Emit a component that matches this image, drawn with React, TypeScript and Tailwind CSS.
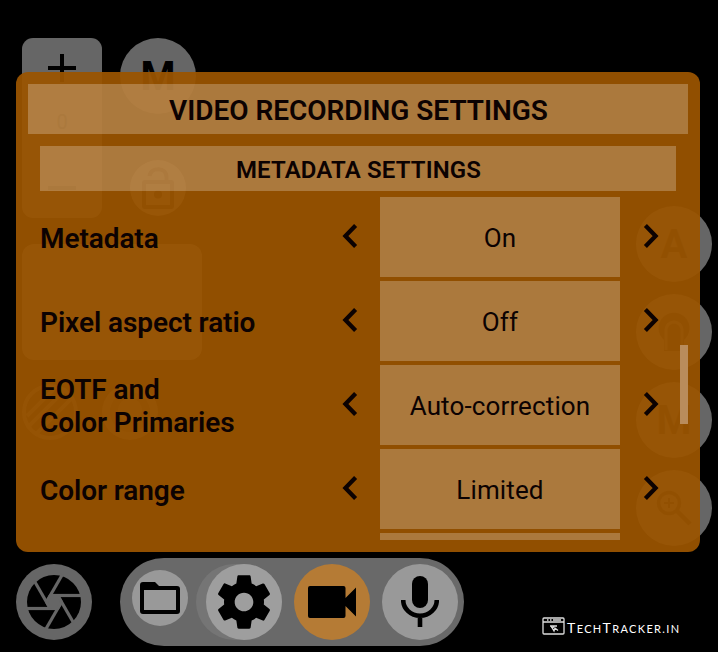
import React from "react";

const settings = [
  { label: ["Metadata"], value: "On" },
  { label: ["Pixel aspect ratio"], value: "Off" },
  { label: ["EOTF and", "Color Primaries"], value: "Auto-correction" },
  { label: ["Color range"], value: "Limited" },
];

function Chevron({ flip = false }: { flip?: boolean }) {
  return (
    <svg className={flip ? "block rotate-180" : "block"} width="16" height="26" viewBox="0 0 16 26" fill="none">
      <path d="M13.600 2.500 3.400 13 13.600 23.500" stroke="#0c0202" strokeWidth="4.200" />
    </svg>
  );
}

function CameraControls() {
  return (
    <div className="absolute inset-0 flex justify-between pl-[22px] pr-[6px] text-black">
      <div className="flex flex-col pt-[38px]">
        <div className="flex h-[180px] gap-[18px]">
          <div className="flex w-[80px] flex-col items-center justify-between rounded-[11px] bg-[#666] py-[16px]">
            <svg width="28" height="28" viewBox="0 0 28 28">
              <path d="M0 14h28M14 0v28" stroke="#000" strokeWidth="4" />
            </svg>
            <span className="-mt-[12px] text-[20px] leading-none">0</span>
            <svg width="28" height="28" viewBox="0 0 28 28">
              <path d="M0 14h28" stroke="#000" strokeWidth="4" />
            </svg>
          </div>
          <div className="flex flex-col items-center justify-between pb-[2px]">
            <div className="flex h-[76px] w-[76px] items-center justify-center rounded-full bg-[#666] pt-[2px] text-[40px] font-bold">M</div>
            <div className="flex h-[56px] w-[56px] items-center justify-center rounded-full bg-[#777]">
              <svg width="32" height="42" viewBox="0 0 32 42" fill="none" stroke="#111" strokeWidth="4">
                <rect x="2" y="15" width="28" height="25" rx="1" />
                <path d="M7.500 9C9 -.500 24.500 0 24.500 10V15" />
                <circle cx="16" cy="27.500" r="4" fill="#111" stroke="none" />
              </svg>
            </div>
          </div>
        </div>
        <div className="mt-[26px] h-[116px] w-[180px] rounded-[12px] bg-[#666]" />
        <div className="mt-[24px] flex gap-[24px]">
          <svg width="56" height="56" viewBox="0 0 56 56" fill="none" stroke="#484848" strokeWidth="4">
            <circle cx="28" cy="28" r="26" />
            <path d="M5 32 32 5M5 44 44 5M13 51 51 13" />
          </svg>
          <svg width="56" height="56" viewBox="0 0 56 56">
            <circle cx="28" cy="28" r="28" fill="#484848" />
            <circle cx="28" cy="28" r="20" fill="#222" />
            <circle cx="28" cy="26" r="12" fill="#484848" />
          </svg>
        </div>
      </div>
      <div className="flex flex-col gap-[12px] pt-[206px] text-[40px] font-bold text-[#1c1c1c]">
        <div className="flex h-[76px] w-[76px] items-center justify-center rounded-full bg-[#666] pt-[2px]">A</div>
        <div className="flex h-[76px] w-[76px] items-center justify-center rounded-full bg-[#666]">
          <svg width="34" height="40" viewBox="0 0 34 40">
            <path d="M7 28A15.500 15.500 0 1 1 27 28V39H7z" fill="#1c1c1c" />
            <path d="M9 38V18a8 8 0 0 1 16 0V38" fill="none" stroke="#5c5c5c" strokeWidth="3" />
          </svg>
        </div>
        <div className="flex h-[76px] w-[76px] items-center justify-center rounded-full bg-[#666] pt-[2px]">M</div>
        <div className="flex h-[76px] w-[76px] items-center justify-center rounded-full bg-[#666]">
          <svg width="36" height="36" viewBox="0 0 36 36" fill="none" stroke="#1c1c1c" strokeWidth="3.500">
            <circle cx="13" cy="13" r="10.500" />
            <path d="m21 21 13 13" strokeWidth="4.500" />
            <path d="M8 13h10M13 8v10" strokeWidth="2" />
          </svg>
        </div>
      </div>
    </div>
  );
}

function Aperture() {
  const blades = [0, 60, 120, 180, 240, 300];
  return (
    <svg width="76" height="76" viewBox="0 0 76 76">
      <circle cx="38" cy="38" r="38" fill="#666" />
      <circle cx="38" cy="38" r="27" fill="#000" />
      <path d="M47.200 38 42.600 30H33.400L28.800 38 33.400 46H42.600z" fill="#666" />
      {blades.map((a) => (
        <path key={a} d="M34 31.500H66" stroke="#666" strokeWidth="3.200" transform={`rotate(${a} 38 38)`} />
      ))}
    </svg>
  );
}

function BottomBar() {
  return (
    <div className="mt-[6px] flex h-[88px] items-center pl-[16px]">
      <Aperture />
      <div className="ml-[28px] flex h-[88px] w-[344px] items-center rounded-full bg-[#696969] pl-[12px]">
        <div className="mb-[8px] flex h-[56px] w-[56px] items-center justify-center rounded-full bg-[#999]">
          <svg width="40" height="32" viewBox="0 0 40 32">
            <path fillRule="evenodd" d="M3 0H15L19 4H37Q40 4 40 7V29Q40 32 37 32H3Q0 32 0 29V3Q0 0 3 0zM4 8V28H36V8z" />
          </svg>
        </div>
        <div className="ml-[8px] h-[76px] w-[86px] rounded-full bg-[#757575] pl-[10px]">
          <div className="flex h-[76px] w-[76px] items-center justify-center rounded-full bg-[#9e9e9e]">
            <svg width="64" height="64" viewBox="0 0 24 24">
              <path d="M19.43 12.98c.04-.32.07-.64.07-.98s-.03-.66-.07-.98l2.11-1.65c.19-.15.24-.42.12-.64l-2-3.46c-.12-.22-.39-.3-.61-.22l-2.49 1c-.52-.4-1.08-.73-1.69-.98l-.38-2.65C14.46 2.18 14.25 2 14 2h-4c-.25 0-.46.18-.49.42l-.38 2.65c-.61.25-1.17.59-1.69.98l-2.49-1c-.23-.09-.49 0-.61.22l-2 3.46c-.13.22-.07.49.12.64l2.11 1.65c-.04.32-.07.65-.07.98s.03.66.07.98l-2.11 1.65c-.19.15-.24.42-.12.64l2 3.46c.12.22.39.3.61.22l2.49-1c.52.4 1.08.73 1.69.98l.38 2.65c.03.24.24.42.49.42h4c.25 0 .46-.18.49-.42l.38-2.65c.61-.25 1.17-.59 1.69-.98l2.49 1c.23.09.49 0 .61-.22l2-3.46c.12-.22.07-.49-.12-.64l-2.11-1.65zM12 15.5c-1.93 0-3.5-1.57-3.5-3.5s1.57-3.5 3.5-3.5 3.5 1.57 3.5 3.5-1.57 3.5-3.5 3.5z" />
            </svg>
          </div>
        </div>
        <div className="ml-[12px] flex h-[76px] w-[76px] items-center justify-center rounded-full bg-[#b57b35]">
          <svg width="48" height="32" viewBox="0 0 48 32">
            <path d="M2 0H35.500Q37.500 0 37.500 2V12L48 1.500V30.500L37.500 20V30Q37.500 32 35.500 32H2Q0 32 0 30V2Q0 0 2 0z" />
          </svg>
        </div>
        <div className="ml-[12px] flex h-[76px] w-[76px] items-center justify-center rounded-full bg-[#999]">
          <svg width="38" height="52" viewBox="0 0 38 52">
            <rect x="11" y="0" width="16" height="32" rx="8" />
            <path d="M2.200 24A16.800 15.800 0 0 0 35.800 24M19 40V51" fill="none" stroke="#000" strokeWidth="4.600" />
          </svg>
        </div>
      </div>
      <div className="ml-[78px] mt-[48px] flex items-center text-white">
        <svg width="24" height="18" viewBox="0 0 24 18" fill="none" stroke="#ddd" strokeWidth="1.300">
          <rect x="1" y="1" width="21" height="16" rx="1" />
          <path d="M1 5h21M5 3h1.500M8 3h1.500M11 3h8M8 9h7M9 9l3 5 1-3 3 2.500M12 9.500l-2 2" />
        </svg>
        <span className="mt-[3px] whitespace-nowrap pl-[1px] font-['Lato',sans-serif] text-[11px] leading-none tracking-[1.350px]">
          <span className="text-[14px]">T</span>ECH<span className="text-[14px]">T</span>RACKER.IN
        </span>
      </div>
    </div>
  );
}

export default function App() {
  return (
    <div className="relative h-[652px] w-[718px] overflow-hidden bg-black pt-[72px] font-['Roboto',sans-serif]">
      <CameraControls />
      <main className="relative ml-[16px] h-[480px] w-[684px] rounded-[12px] bg-[#9a5400]/94 p-[12px] text-[#0c0202]">
        <h1 className="flex h-[50px] items-center justify-center bg-white/24 pl-[1px] pt-[3px] text-[28px] font-semibold tracking-[-0.030px]">
          <span>VIDEO RECORDING SETTINGS</span>
        </h1>
        <h2 className="mx-[12px] mt-[12px] flex h-[45px] items-center justify-center bg-white/24 pt-[3px] pl-[1px] text-[24px] font-semibold tracking-[0.130px]">
          <span>METADATA SETTINGS</span>
        </h2>
        <div className="mt-[6px] flex h-[343px] flex-col gap-[4px] overflow-hidden pl-[12px]">
          {settings.map((row) => (
            <div key={row.value} className="flex h-[80px] shrink-0 items-center">
              <div className={`w-[302px] text-[28px] font-semibold leading-[33px] tracking-[-0.080px] ${row.label.length > 1 ? "pt-[1px]" : "pt-[3px]"}`}>
                {row.label.map((line) => (
                  <div key={line}>{line}</div>
                ))}
              </div>
              <div className="-mt-[2px] w-[38px]">
                <Chevron />
              </div>
              <div className="flex h-[80px] w-[240px] items-center justify-center bg-white/24 pt-[2px] text-[26px] tracking-[0.130px]">
                <span>{row.value}</span>
              </div>
              <div className="-mt-[2px] ml-[23px]">
                <Chevron flip />
              </div>
            </div>
          ))}
          <div className="ml-[340px] h-[80px] w-[240px] shrink-0 bg-white/24" />
        </div>
        <div className="absolute right-[12px] top-[273px] h-[79px] w-[8px] bg-[#b98c5c]" />
      </main>
      <BottomBar />
    </div>
  );
}
